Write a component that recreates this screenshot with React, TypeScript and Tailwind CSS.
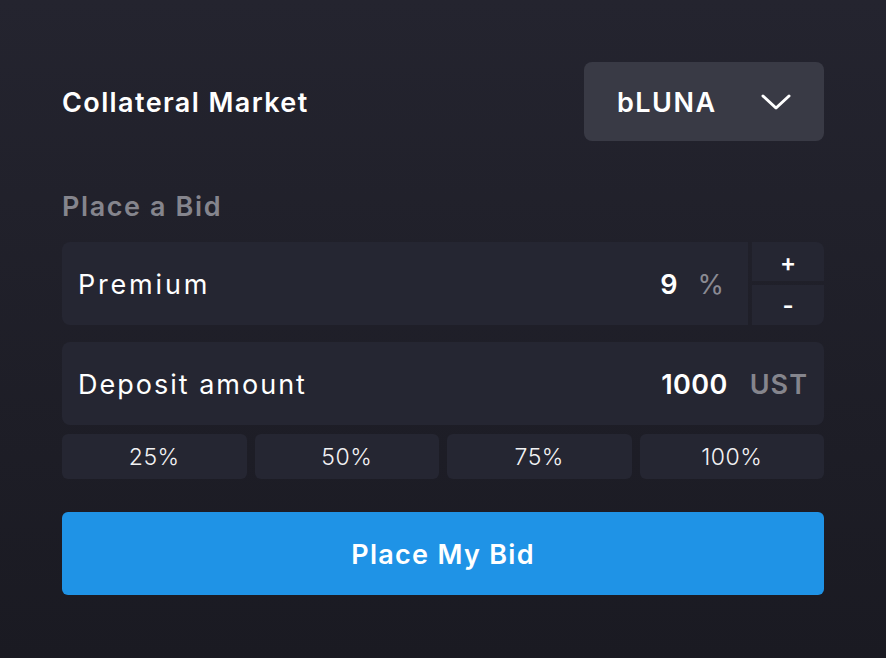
const font = { fontFamily: 'Inter, "Open Sans", sans-serif' }

function Chevron() {
  return (
    <svg width="30" height="20" viewBox="0 0 30 20" fill="none" className="text-white">
      <polyline points="2,4 15,16 28,4" stroke="currentColor" strokeWidth="3" strokeLinecap="round" strokeLinejoin="round" />
    </svg>
  )
}

function PercentButton({ label }: { label: string }) {
  return (
    <button className="flex h-[45px] items-center justify-center rounded-md bg-[#252632] pt-[3px] text-[23px] font-light tracking-[0.5px] text-[#f2f2f4]">
      {label}
    </button>
  )
}

export default function App() {
  return (
    <div
      className="flex h-[658px] w-[886px] flex-col bg-gradient-to-b from-[#24242f] to-[#1a1a22] px-[62px] pt-[62px]"
      style={font}
    >
      <div className="flex items-center justify-between">
        <h2 className="pt-[4px] text-[27px] font-semibold tracking-[1.4px] text-white">Collateral Market</h2>
        <button className="flex h-[79px] w-[240px] items-center justify-between rounded-lg bg-[#393a45] pl-[33px] pr-[33px]">
          <span className="pt-[4px] text-[27px] font-semibold tracking-[1.5px] text-white">bLUNA</span>
          <Chevron />
        </button>
      </div>

      <p className="mt-[46px] text-[27px] font-semibold tracking-[1.6px] text-[#85858d]">Place a Bid</p>

      <div className="mt-[14px] flex h-[83px]">
        <div className="flex flex-1 items-center justify-between rounded-l-lg bg-[#252632] pl-[16px] pr-[24px]">
          <span className="pt-[4px] text-[27px] tracking-[2.8px] text-white">Premium</span>
          <div className="flex items-center gap-[20px] pt-[4px]">
            <span className="text-[27px] font-semibold text-white">9</span>
            <span className="text-[27px] text-[#8a8a92]">%</span>
          </div>
        </div>
        <div className="ml-[4px] flex w-[72px] flex-col gap-[4px]">
          <button className="flex flex-1 items-center justify-center rounded-tr-lg bg-[#252632] pt-[3px] text-[24px] font-semibold text-white">
            +
          </button>
          <button className="flex flex-1 items-center justify-center rounded-br-lg bg-[#252632] pt-[3px] text-[24px] font-semibold text-white">
            -
          </button>
        </div>
      </div>

      <div className="mt-[17px] flex h-[83px] items-center justify-between rounded-lg bg-[#252632] px-[16px]">
        <span className="pt-[4px] text-[27px] tracking-[2px] text-white">Deposit amount</span>
        <div className="flex items-center gap-[22px] pt-[4px]">
          <span className="text-[27px] font-semibold tracking-[0.4px] text-white">1000</span>
          <span className="text-[27px] font-semibold tracking-[1px] text-[#85858d]">UST</span>
        </div>
      </div>

      <div className="mt-[9px] grid grid-cols-4 gap-2">
        <PercentButton label="25%" />
        <PercentButton label="50%" />
        <PercentButton label="75%" />
        <PercentButton label="100%" />
      </div>

      <button className="mt-[33px] flex h-[83px] items-center justify-center rounded-md bg-[#1f93e6] pt-[4px] text-[27px] font-semibold tracking-[1.3px] text-white">
        Place My Bid
      </button>
    </div>
  )
}
